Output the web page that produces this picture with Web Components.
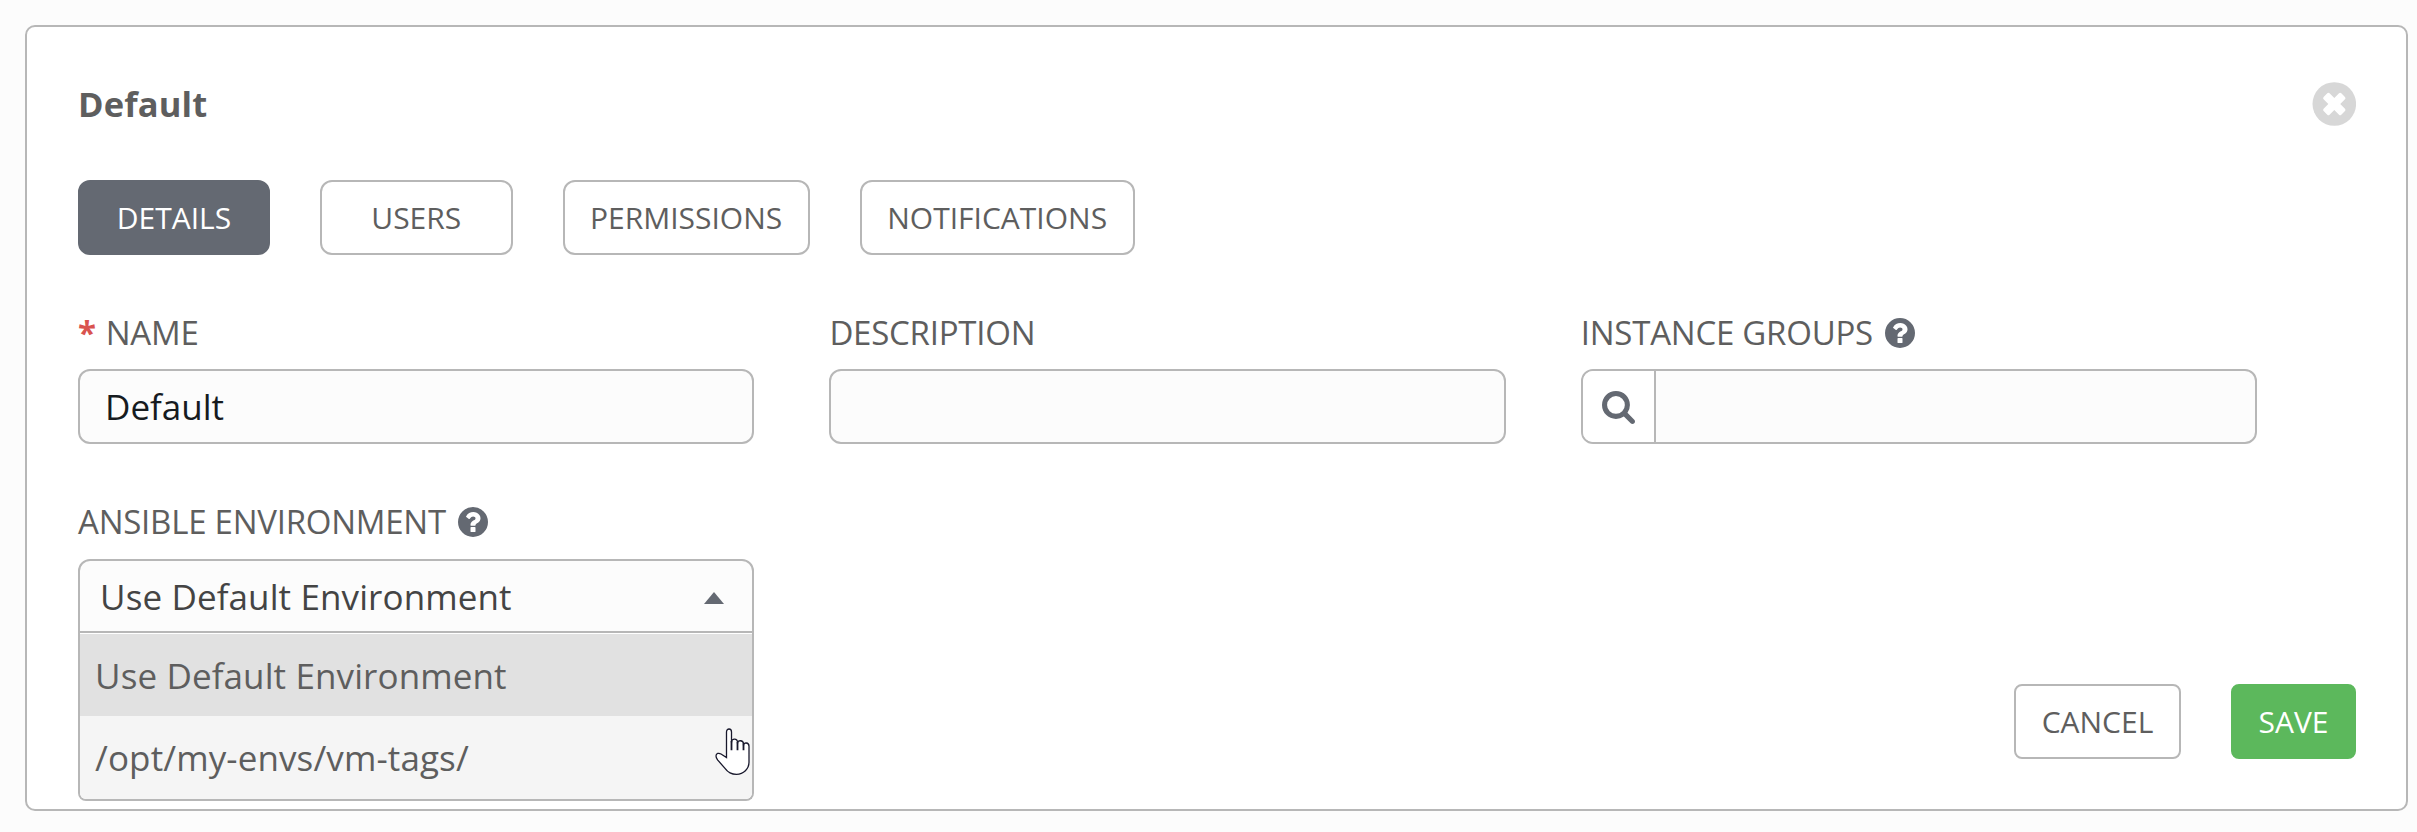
<!DOCTYPE html>
<html lang="en">
<head>
<meta charset="utf-8">
<title>Organization - Default</title>
<style>
html,body{margin:0;height:100%}
body{background:#fcfcfc;font-family:"Open Sans","Noto Sans",sans-serif;color:#5e5e5e;overflow:hidden}
</style>
</head>
<body>
<org-page></org-page>
<script>
const define=(name,html)=>customElements.define(name,class extends HTMLElement{
  constructor(){super();this.attachShadow({mode:'open'}).innerHTML=html;}
});

define('close-icon',`<style>:host{display:block;width:44px;height:44px}svg{display:block}</style>
<svg width="44" height="44" viewBox="0 0 44 44"><circle cx="22.300" cy="22" r="21.800" fill="#d7d7d7"/><g transform="translate(22.300 22) rotate(45)" fill="#fff"><rect x="-12.500" y="-4.200" width="25" height="8.400" rx="1.600"/><rect x="-4.200" y="-12.500" width="8.400" height="25" rx="1.600"/></g></svg>`);

define('help-icon',`<style>:host{display:block;width:30px;height:30px}svg{display:block}</style>
<svg width="30" height="30" viewBox="0 0 1536 1536"><path fill="#646972" fill-rule="evenodd" d="M768 0a768 768 0 1 1 0 1536a768 768 0 1 1 0-1536zM896 1248v-192q0-14-9-23t-23-9H672q-14 0-23 9t-9 23v192q0 14 9 23t23 9h192q14 0 23-9t9-23zM1152 576q0-88-55.500-163T958 297T788 256q-243 0-371 213q-15 24 8 42l132 100q7 6 19 6q16 0 25-12q53-68 86-92q34-24 86-24q48 0 85.500 26t37.500 59q0 38-20 61t-68 45q-63 28-115.500 86.500T640 892v36q0 14 9 23t23 9h192q14 0 23-9t9-23q0-19 21.500-49.500T972 829q32-18 49-28.500t46-35t44.500-48t28-60.500t12.500-81z"/></svg>`);

define('search-icon',`<style>:host{display:block;width:33px;height:33px}svg{display:block}</style>
<svg width="33" height="33" viewBox="0 0 1664 1664"><path fill="#646972" fill-rule="evenodd" d="M1152 704q0-185-131.500-316.500T704 256T387.500 387.500T256 704t131.500 316.500T704 1152t316.500-131.500T1152 704zM1664 1536q0 52-38 90t-90 38q-54 0-90-38l-343-342q-179 124-399 124q-143 0-273.500-55.500t-225-150t-150-225T0 704t55.500-273.500t150-225t225-150T704 0t273.500 55.500t225 150t150 225T1408 704q0 220-124 399l343 343q37 37 37 90z"/></svg>`);

define('tab-button',`<style>
:host{display:flex;align-items:center;justify-content:center;box-sizing:border-box;height:75px;min-width:192.500px;padding:0 25.500px;border:2px solid #b7b7b7;border-radius:12px;background:#fff;font-size:30px;line-height:42px;white-space:nowrap}
:host([active]){min-width:192px;background:#646972;border-color:#646972;color:#fff}
</style><slot></slot>`);

define('action-button',`<style>
:host{display:flex;align-items:center;justify-content:center;box-sizing:border-box;height:75px;border:2px solid #b7b7b7;border-radius:8px;background:#fff;font-size:30px;line-height:42px;white-space:nowrap}
:host([primary]){background:#5cb85c;border-color:#5cb85c;color:#fff}
</style><slot></slot>`);

define('form-field',`<style>
:host{display:block;min-width:0}
.label{display:flex;align-items:center;height:46px;margin:-1px 0 13px;font-size:33px;line-height:46px;letter-spacing:-.24px;white-space:nowrap}
:host([raised]) .label{margin:-2px 0 14px}
</style><div class="label"><slot name="label"></slot></div><slot></slot>`);

define('text-input',`<style>
:host{display:flex;align-items:center;box-sizing:border-box;height:75px;border:2px solid #b7b7b7;border-radius:12px;background:#fcfcfc;color:#161b1f;font-size:35px;line-height:48px;overflow:hidden}
.text{padding-left:25px}
::slotted([slot=addon]){box-sizing:border-box;width:73px;height:71px;padding:20px 0 0 19px;background:#fff;border-right:2px solid #b7b7b7}
</style><slot name="addon"></slot><div class="text"><slot></slot></div>`);

define('select-box',`<style>
:host{display:block;position:relative;height:75px;color:#444;font-size:35px;line-height:48px;letter-spacing:.11px;white-space:nowrap}
.current{display:flex;align-items:center;justify-content:space-between;box-sizing:border-box;height:74px;padding:2px 28px 0 20px;border:2px solid #b7b7b7;border-radius:12px 12px 0 0;background:#fcfcfc}
svg{display:block;margin-top:2px}
.menu{position:absolute;top:74px;left:0;right:0;box-sizing:border-box;height:168px;padding-top:1px;border:2px solid #b7b7b7;border-top:0;border-radius:0 0 8px 8px;background:#fff;overflow:hidden;color:#5e5e5e}
</style><div class="current"><slot name="value"></slot><svg width="20" height="12" viewBox="0 0 20 12"><path d="M10 0L20 12H0z" fill="#646972"/></svg></div><div class="menu"><slot></slot></div>`);

define('select-option',`<style>
:host{display:flex;align-items:center;box-sizing:border-box;height:83px;padding-left:15px;background:#f5f5f5}
:host([selected]){height:82px;padding-top:1px;background:#e1e1e1}
</style><slot></slot>`);

define('hand-cursor',`<style>:host{position:absolute;left:634.500px;top:95px;width:36px;height:48px}svg{display:block}</style>
<svg width="36" height="48" viewBox="0 0 36 48"><path d="M11.500 29.500V4c0-4 5-4 5 0V14.500c0-4.800 6-4.300 6 0V15.500c0-4 6-3.500 6 .6V17.500c0-3.600 5.500-3.300 5.500.8V34c0 7-5.500 12.300-12.500 12.300c-5 0-8.500-1.800-11.500-6L2.800 32.200c-.8-1.200-1.800-2.500-1.800-4.200c0-2.800 2.800-3.300 5-2z" fill="#fff" stroke="#18182c" stroke-width="1.300"/><path d="M16.500 13v9.300M22.500 14v8.300M28.500 15.500v6.800" stroke="#18182c" stroke-width="1.800"/></svg>`);

define('org-page',`<style>
:host{display:block;box-sizing:border-box;height:832px;padding:25px 9px 21px 25px}
.panel{display:flex;flex-direction:column;box-sizing:border-box;height:786px;padding:51px 50px 50px 51px;border:2px solid #b7b7b7;border-radius:10px;background:#fff}
header{display:flex;align-items:center;justify-content:space-between;height:52px}
h1{margin:0;font-size:34.500px;line-height:48px;font-weight:700;letter-spacing:.16px}
nav{display:flex;gap:50px;margin-top:50px}
.grid{display:grid;grid-template-columns:repeat(3,676.400px);column-gap:75px;row-gap:57px;margin-top:56px}
.req{color:#d9534f;font-weight:700;margin-right:10px}
help-icon{margin-left:12px}
footer{display:flex;justify-content:flex-end;gap:50px;margin-top:50px}
.cancel{width:167px}.save{width:125px}
</style>
<div class="panel">
<header><h1>Default</h1><close-icon></close-icon></header>
<nav><tab-button active>DETAILS</tab-button><tab-button>USERS</tab-button><tab-button>PERMISSIONS</tab-button><tab-button>NOTIFICATIONS</tab-button></nav>
<div class="grid">
<form-field><span slot="label" class="req">*</span><span slot="label">NAME</span><text-input>Default</text-input></form-field>
<form-field><span slot="label">DESCRIPTION</span><text-input></text-input></form-field>
<form-field><span slot="label">INSTANCE GROUPS</span><help-icon slot="label"></help-icon><text-input><div slot="addon"><search-icon></search-icon></div></text-input></form-field>
<form-field raised><span slot="label">ANSIBLE ENVIRONMENT</span><help-icon slot="label"></help-icon>
<select-box><span slot="value">Use Default Environment</span><select-option selected>Use Default Environment</select-option><select-option>/opt/my-envs/vm-tags/</select-option><hand-cursor></hand-cursor></select-box></form-field>
</div>
<footer><action-button class="cancel">CANCEL</action-button><action-button class="save" primary>SAVE</action-button></footer>
</div>`);
</script>
</body>
</html>
